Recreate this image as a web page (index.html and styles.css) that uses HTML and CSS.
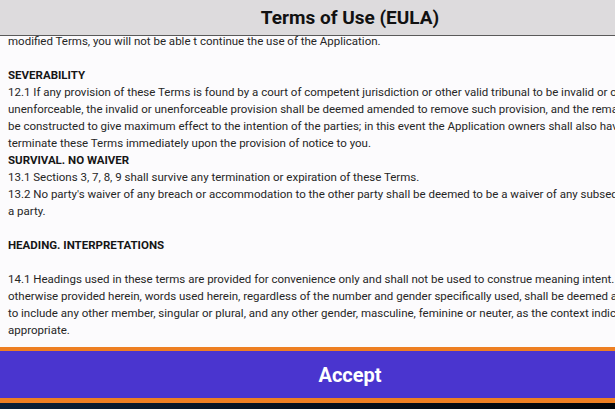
FILE: index.html
```html
<!DOCTYPE html>
<html lang="en">
<head>
    <meta charset="UTF-8">
    <meta name="viewport" content="width=device-width, initial-scale=1.0">
    <title>Terms of Use (EULA)</title>
    <link rel="stylesheet" href="styles.css">
</head>
<body>
    <div class="dialog">
        <header class="dialog-header">
            <h1>Terms of Use (EULA)</h1>
        </header>

        <main class="dialog-body">
            <div class="terms">
                <p>modified Terms, you will not be able t continue the use of the Application.</p>

                <h3>SEVERABILITY</h3>
                <p class="tight">12.1 If any provision of these Terms is found by a court of competent jurisdiction or other valid tribunal to be invalid or otherwise<br>
                unenforceable, the invalid or unenforceable provision shall be deemed amended to remove such provision, and the remaining provisions shall<br>
                be constructed to give maximum effect to the intention of the parties; in this event the Application owners shall also have the right to<br>
                terminate these Terms immediately upon the provision of notice to you.</p>
                <h3 class="tight">SURVIVAL. NO WAIVER</h3>
                <p class="tight">13.1 Sections 3, 7, 8, 9 shall survive any termination or expiration of these Terms.<br>
                13.2 No party's waiver of any breach or accommodation to the other party shall be deemed to be a waiver of any subsequent breach by such<br>
                a party.</p>

                <h3>HEADING. INTERPRETATIONS</h3>
                <p>14.1 Headings used in these terms are provided for convenience only and shall not be used to construe meaning intent. Except as<br>
                otherwise provided herein, words used herein, regardless of the number and gender specifically used, shall be deemed and construed<br>
                to include any other member, singular or plural, and any other gender, masculine, feminine or neuter, as the context indicates is<br>
                appropriate.</p>
            </div>
        </main>

        <footer class="dialog-footer">
            <button class="accept-btn">Accept</button>
        </footer>
    </div>
</body>
</html>
```

FILE: styles.css
```css
* {
    margin: 0;
    padding: 0;
    box-sizing: border-box;
    font-family: 'Roboto', 'Liberation Sans', sans-serif;
}

body {
    background: linear-gradient(90deg, #0b2038, #06101e 50%, #020509);
    overflow: hidden;
    height: 409px;
}

/* Dialog */
.dialog {
    width: 700px;
    height: 403px;
    display: flex;
    flex-direction: column;
}

.dialog-header {
    height: 36px;
    background-color: #dddbdd;
    border-bottom: 1px solid #5a5a5a;
    display: flex;
    align-items: center;
    justify-content: center;
}

.dialog-header h1 {
    font-size: 19px;
    font-weight: bold;
    color: #111;
}

/* Terms text */
.dialog-body {
    flex: 1;
    overflow: hidden;
    background-color: #fcfbfd;
}

.terms {
    margin-top: -3px;
    padding: 0 8px;
    font-size: 11.5px;
    line-height: 17px;
    color: #262626;
    white-space: nowrap;
}

.terms h3 {
    font-size: 11.5px;
    font-weight: bold;
    color: #161616;
    margin-top: 17px;
}

.terms h3.tight {
    margin-top: 0;
}

.terms h3 + p:not(.tight) {
    margin-top: 17px;
}

/* Footer */
.dialog-footer {
    border-top: 4px solid #ee7f22;
    border-bottom: 5px solid #ee7f22;
    background-color: #4a35cf;
}

.accept-btn {
    width: 100%;
    height: 47px;
    background: none;
    border: none;
    color: #fff;
    font-size: 20px;
    font-weight: bold;
}
```
